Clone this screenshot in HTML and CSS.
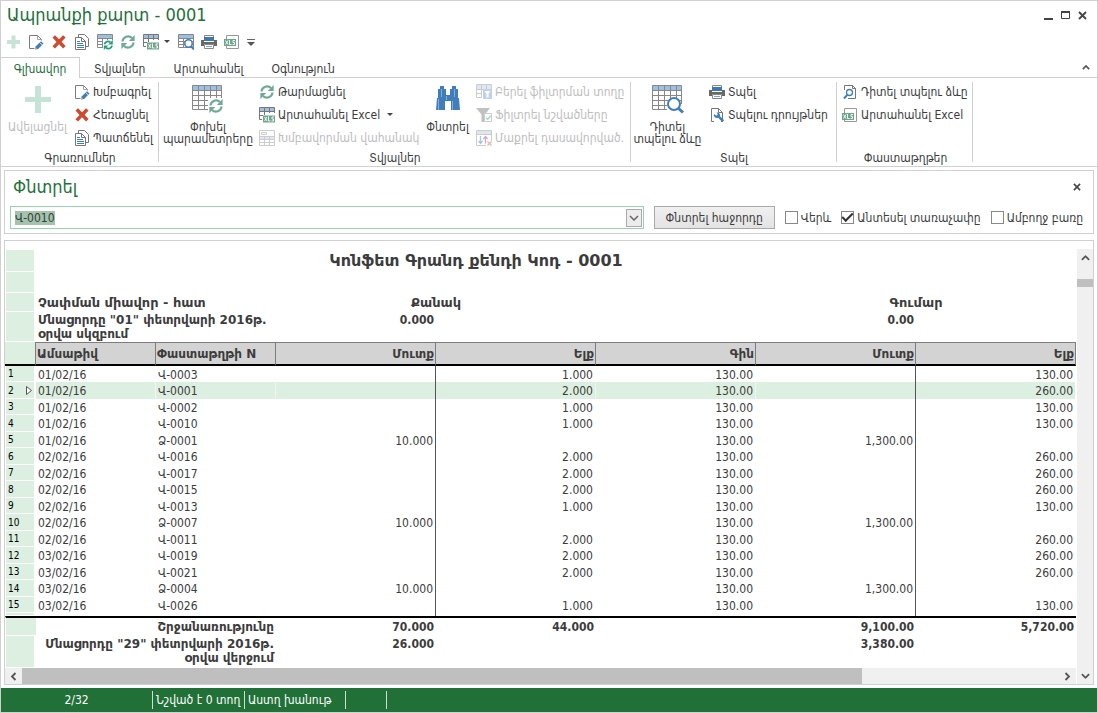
FILE: index.html
```html
<!DOCTYPE html>
<html lang="hy">
<head>
<meta charset="utf-8">
<meta name="viewport" content="width=device-width, initial-scale=1">
<title>Ապրանքի քարտ - 0001</title>
<link rel="stylesheet" href="styles.css">
</head>
<body>
<svg class="sprite" width="0" height="0" aria-hidden="true">
  <symbol id="i-plus" viewBox="0 0 16 16"><path d="M6.500 1.500h4v4.500h4.500v4h-4.500v4.500h-4V10H2V6h4.500z" fill="#c5e3d7"/></symbol>
  <symbol id="i-plus-lg" viewBox="0 0 32 32"><path d="M13 3h6v11h10v5H19v11h-6V19H3v-5h10z" fill="#c5e3d7"/></symbol>
  <symbol id="i-edit" viewBox="0 0 16 16"><path d="M6.500 14.500H1.500V1.500H9.500L13.500 5.500V6.500" fill="none" stroke="#7b7b7b"/><path d="M9.500 1.500V5.500H13" fill="none" stroke="#a5a5a5"/><path d="M7 15.500l.6-3L13 7.200l2.500 2.400-5.300 5.300z" fill="#3f7dbb"/><path d="M7 15.500l.5-2.200 1.600 1.700z" fill="#e6bd6d"/><path d="M11.700 8.500l2.500 2.500" stroke="#fff" stroke-width=".8"/></symbol>
  <symbol id="i-del" viewBox="0 0 16 16"><path d="M1.500 3.500L4 1.200 8.100 5.200 12 1.200l2.600 2.400-4 4.200 4 4.300-2.500 2.400L8 10.300 4 14.600l-2.600-2.400 4.100-4.300z" fill="#ce4a2f"/></symbol>
  <symbol id="i-copy" viewBox="0 0 16 16"><path d="M4.500 3.500V.500H10.500L14.500 4.500V12.500H11.500" fill="none" stroke="#777"/><path d="M1.500 3.500H7.500L11.500 7.500V15.500H1.500zM7.500 3.500V7.500H11.500" fill="#fff" stroke="#777"/><path d="M3 7.500h3M3 9.500h6M3 11.500h7M3 13.500h7" stroke="#3f7dbb"/></symbol>
  <symbol id="i-grid" viewBox="0 0 16 16"><path d="M1 1h14v3H1z" fill="#9fbfe0"/><path d="M.500 .500H15.500V13.500H.500zM.500 4.500H15.500M.500 7.500H15.500M.500 10.500H15.500M5.500 4V13M10.500 4V13" fill="none" stroke="#888"/></symbol>
  <symbol id="i-cycle" viewBox="0 0 16 16"><path d="M2.500 7.500A5.600 5.600 0 0 1 12 4" fill="none" stroke="#6fa994" stroke-width="2.200"/><path d="M14.600 1v6H8.800z" fill="#6fa994"/><path d="M13.500 8.500A5.600 5.600 0 0 1 4 12" fill="none" stroke="#6fa994" stroke-width="2.200"/><path d="M1.400 15V9h5.800z" fill="#6fa994"/></symbol>
  <symbol id="i-gridcycle" viewBox="0 0 16 16"><use href="#i-grid"/><path d="M6 6h10v10H6z" fill="#fff"/><path d="M7.500 10.300A3.600 3.600 0 0 1 13.400 8.300M15 11.700A3.600 3.600 0 0 1 9 13.700" fill="none" stroke="#21a179" stroke-width="1.800"/><path d="M15.800 6v4.500h-4.500zM6.800 16v-4.500h4.500z" fill="#21a179"/></symbol>
  <symbol id="i-mark" viewBox="0 0 12 7"><path d="M0 0h12v7H0z" fill="#6fa58d"/><path d="M1.500 1.500l2.500 4M4 1.500l-2.500 4M5.500 1v4.500h2M11 1.500H9v2h1.500v2H8.500" fill="none" stroke="#fff" stroke-width=".9"/></symbol>
  <symbol id="i-gridxls" viewBox="0 0 16 16"><path d="M1 1h14v3H1z" fill="#9fbfe0"/><path d="M.500 12.500V.500H15.500V6M.500 4.500H15.500M5.500 1V8M10.500 1V6M.500 8.500H4M.500 12.500H3" fill="none" stroke="#777"/><use href="#i-mark" x="4" y="8" width="12" height="8"/></symbol>
  <symbol id="i-gridzoom" viewBox="0 0 16 16"><use href="#i-grid"/><circle cx="10.500" cy="9.500" r="3.700" fill="#fff" stroke="#3f7dbb" stroke-width="1.500"/><path d="M13 12l3 3.500" stroke="#3f7dbb" stroke-width="2"/></symbol>
  <symbol id="i-print" viewBox="0 0 16 16"><path d="M3.500 5V1.500H12.500V5" fill="#fff" stroke="#888"/><path d="M3 3h10v4H3z" fill="#3b78b8"/><path d="M0 6h3v2h10V6h3v6h-3v-2H3v2H0z" fill="#686868"/><path d="M3.500 10.500H12.500V14.500H3.500z" fill="#fff" stroke="#888"/><path d="M5 12.500h6" stroke="#7aa7d4"/></symbol>
  <symbol id="i-xls" viewBox="0 0 16 16"><path d="M2.500 6V1.500H14.500V14.500H2.500V12" fill="#fff" stroke="#999"/><use href="#i-mark" x="0" y="5" width="12" height="7"/></symbol>
  <symbol id="i-docxls" viewBox="0 0 16 16"><path d="M2.500 6V1.500H14.500V14.500H2.500V12" fill="#fff" stroke="#999"/><use href="#i-mark" x="0" y="6" width="12" height="7"/></symbol>
  <symbol id="i-doczoom" viewBox="0 0 16 16"><path d="M2.500 6V1.500H10.500L13.500 4.500V14.500H6M10.500 1.500V4.500H14" fill="none" stroke="#777"/><circle cx="7.500" cy="8.500" r="3" fill="#fff" stroke="#3f7dbb" stroke-width="1.300"/><path d="M5.300 10.800L2 14.500" stroke="#3f7dbb" stroke-width="2"/></symbol>
  <symbol id="i-docset" viewBox="0 0 16 16"><path d="M5 14.500H2.500V1.500H9.500L13.500 5.500V14.500H12M9.500 1.500V5.500H13.500" fill="none" stroke="#777"/><path d="M5 7a3 3 0 0 0 4.200 3.700l4 4.300 2-1.700-4.200-4A3 3 0 0 0 7.500 5.500l1.300 1.800-1.400 1.400z" fill="#3f7dbb"/></symbol>
  <symbol id="i-gridgroup" viewBox="0 0 16 16"><path d="M1 7h14v3H1z" fill="#dde7f6"/><path d="M.500 .500H15.500V15.500H.500zM.500 6.500H15.500M.500 9.500H15.500M.500 12.500H15.500M5.500 7V15M10.500 7V15M2.500 2.500h5v2h-5z" fill="none" stroke="#ccc"/></symbol>
  <symbol id="i-gridfilter" viewBox="0 0 16 16"><path d="M1 1h14v4H1z" fill="#dde7f6"/><path d="M.500 .500H15.500V5.500H.500zM.500 5.500V13.500H6M.500 9.500H6M5.500 .500V13M10.500 .500V5" fill="none" stroke="#ccc"/><path d="M7 5h9v10H7z" fill="#bdd3eb"/><path d="M8.500 7h6l-2 3v3.500h-2V10z" fill="#fff"/></symbol>
  <symbol id="i-filter" viewBox="0 0 16 16"><path d="M0 1h14L9 7.500V15H5.500V7.500z" fill="#c1c1c1"/><path d="M8.500 6.500h7v8h-7z" fill="#fff" stroke="#ccc"/><path d="M10 10.500l1.700 2 3-3.800" fill="none" stroke="#a2d5c1" stroke-width="1.300"/></symbol>
  <symbol id="i-clearsort" viewBox="0 0 16 16"><path d="M1 1h14v3H1z" fill="#dde7f6"/><path d="M10 15.500H.500V.500H15.500V11M.500 4.500H15.500" fill="none" stroke="#ccc"/><path d="M4.500 6v7M2.500 11l2 2.500 2-2.500" fill="none" stroke="#a9c5e4" stroke-width="1.300"/><path d="M9.500 13.500V7M7.500 9l2-2.500 2 2.500" fill="none" stroke="#cfa7cd" stroke-width="1.300"/><path d="M11.500 11.500l4 4M15.500 11.500l-4 4" stroke="#f0b2a5" stroke-width="1.200"/></symbol>
  <symbol id="i-grid-lg" viewBox="0 0 32 32"><path d="M1 3h28v4H1z" fill="#9fbfe0"/><path d="M.500 2.500H29.500V26.500H.500zM.500 7.500H29.500M.500 12.500H29.500M.500 17.500H29.500M.500 22.500H29.500M6.500 3V26M12.500 3V26M18.500 3V26M24.500 3V26" fill="none" stroke="#888"/></symbol>
  <symbol id="i-params" viewBox="0 0 32 32"><use href="#i-grid-lg"/><path d="M16 15h16v17H16z" fill="#fff"/><use href="#i-cycle" x="16" y="15" width="16" height="16"/></symbol>
  <symbol id="i-preview" viewBox="0 0 32 32"><use href="#i-grid-lg"/><path d="M15 21h15v8H15z" fill="#fff"/><circle cx="22" cy="21" r="6" fill="#fff" stroke="#3f7dbb" stroke-width="2"/><path d="M26 25l5 4.500" stroke="#3f7dbb" stroke-width="3"/></symbol>
  <symbol id="i-find" viewBox="0 0 32 32"><path d="M8 3h4v3h2v6h4V6h2V3h4v3h2v9h1l1 12h-9v-9h-6v9H4l1-12h1V6h2z" fill="#3f7dbb"/><path d="M6.500 16v11M9.500 6v8M20.500 18v9M22.500 6v8M14.500 13v4" fill="none" stroke="#86add6"/></symbol>
  <symbol id="i-caret" viewBox="0 0 6 4"><path d="M0 0h6L3 3z" fill="#444"/></symbol>
  <symbol id="i-up" viewBox="0 0 10 6"><path d="M1 5l4-4 4 4" fill="none" stroke="#555" stroke-width="2"/></symbol>
  <symbol id="i-close" viewBox="0 0 9 9"><path d="M1 1l7 7M8 1L1 8" stroke="#444" stroke-width="1.800"/></symbol>
</svg>

<div class="window">
  <header class="titlebar">
    <h1>Ապրանքի քարտ - 0001</h1>
    <div class="winbtns">
      <button aria-label="Minimize"><svg width="9" height="9"><path d="M0 7h9v2H0z" fill="#444"/></svg></button>
      <button aria-label="Maximize"><svg width="9" height="9"><path d="M.500 1.500h8v6h-8z" fill="none" stroke="#444"/><path d="M0 0h9v2H0z" fill="#444"/></svg></button>
      <button aria-label="Close"><svg width="9" height="9"><use href="#i-close"/></svg></button>
    </div>
  </header>

  <div class="quick">
    <button aria-label="Ավելացնել"><svg class="ic"><use href="#i-plus"/></svg></button>
    <button aria-label="Խմբագրել"><svg class="ic"><use href="#i-edit"/></svg></button>
    <button aria-label="Հեռացնել"><svg class="ic"><use href="#i-del"/></svg></button>
    <button aria-label="Պատճենել"><svg class="ic"><use href="#i-copy"/></svg></button>
    <button aria-label="Փոխել պարամետրերը"><svg class="ic"><use href="#i-gridcycle"/></svg></button>
    <button aria-label="Թարմացնել"><svg class="ic"><use href="#i-cycle"/></svg></button>
    <button aria-label="Արտահանել Excel"><svg class="ic"><use href="#i-gridxls"/></svg><svg class="caret"><use href="#i-caret"/></svg></button>
    <button aria-label="Դիտել տպելու ձևը"><svg class="ic"><use href="#i-gridzoom"/></svg></button>
    <button aria-label="Տպել"><svg class="ic"><use href="#i-print"/></svg></button>
    <button aria-label="XLS"><svg class="ic"><use href="#i-xls"/></svg></button>
    <button aria-label="More"><svg width="8" height="7"><path d="M0 .500h8" stroke="#666"/><path d="M0 3h8L4 7z" fill="#555"/></svg></button>
  </div>

  <nav class="tabs">
    <button class="tab active">Գլխավոր</button>
    <button class="tab">Տվյալներ</button>
    <button class="tab">Արտահանել</button>
    <button class="tab">Օգնություն</button>
    <button class="collapse" aria-label="Collapse"><svg width="8" height="5"><use href="#i-up"/></svg></button>
  </nav>

  <div class="ribbon">
    <section class="group g-records">
      <div class="tools">
        <button class="big" disabled><svg><use href="#i-plus-lg"/></svg><span>Ավելացնել</span></button>
        <div class="stack">
          <button><svg class="ic"><use href="#i-edit"/></svg>Խմբագրել</button>
          <button><svg class="ic"><use href="#i-del"/></svg>Հեռացնել</button>
          <button><svg class="ic"><use href="#i-copy"/></svg>Պատճենել</button>
        </div>
      </div>
      <h2>Գրառումներ</h2>
    </section>
    <section class="group g-data">
      <div class="tools">
        <button class="big wide"><svg><use href="#i-params"/></svg><span>Փոխել<br>պարամետրերը</span></button>
        <div class="stack">
          <button><svg class="ic"><use href="#i-cycle"/></svg>Թարմացնել</button>
          <button><svg class="ic"><use href="#i-gridxls"/></svg>Արտահանել Excel<svg class="caret"><use href="#i-caret"/></svg></button>
          <button disabled><svg class="ic"><use href="#i-gridgroup"/></svg>Խմբավորման վահանակ</button>
        </div>
        <button class="big find"><svg><use href="#i-find"/></svg><span>Փնտրել</span></button>
        <div class="stack">
          <button disabled><svg class="ic"><use href="#i-gridfilter"/></svg>Բերել ֆիլտրման տողը</button>
          <button disabled><svg class="ic"><use href="#i-filter"/></svg>Ֆիլտրել նշվածները</button>
          <button disabled><svg class="ic"><use href="#i-clearsort"/></svg>Մաքրել դասավորված.</button>
        </div>
      </div>
      <h2>Տվյալներ</h2>
    </section>
    <section class="group g-print">
      <div class="tools">
        <button class="big"><svg><use href="#i-preview"/></svg><span>Դիտել<br>տպելու ձևը</span></button>
        <div class="stack">
          <button><svg class="ic"><use href="#i-print"/></svg>Տպել</button>
          <button><svg class="ic"><use href="#i-docset"/></svg>Տպելու դրույթներ</button>
        </div>
      </div>
      <h2>Տպել</h2>
    </section>
    <section class="group g-docs">
      <div class="tools">
        <div class="stack">
          <button><svg class="ic"><use href="#i-doczoom"/></svg>Դիտել տպելու ձևը</button>
          <button><svg class="ic"><use href="#i-docxls"/></svg>Արտահանել Excel</button>
        </div>
      </div>
      <h2>Փաստաթղթեր</h2>
    </section>
  </div>

  <form class="search" onsubmit="return false">
    <div class="search-head">
      <h2>Փնտրել</h2>
      <button type="button" aria-label="Close"><svg width="8" height="8" viewBox="0 0 9 9"><use href="#i-close"/></svg></button>
    </div>
    <div class="search-row">
      <div class="combo">
        <input id="query" type="text" value="Վ-0010" aria-label="Փնտրել" autofocus>
        <button type="button" aria-label="Open"><svg width="10" height="6"><path d="M1 1l4 4 4-4" fill="none" stroke="#666" stroke-width="1.500"/></svg></button>
      </div>
      <button class="next">Փնտրել հաջորդը</button>
      <label><input type="checkbox">Վերև</label>
      <label><input type="checkbox" checked>Անտեսել տառաչափը</label>
      <label><input type="checkbox">Ամբողջ բառը</label>
    </div>
  </form>

  <main class="sheet">
    <table>
      <colgroup><col class="c-num"><col class="c-id"><col class="c-id"><col class="c-val"><col class="c-val"><col class="c-val"><col class="c-val"><col class="c-val"></colgroup>
      <thead>
        <tr class="h-title"><td class="gut"></td><th colspan="6" class="doc-title">Կոնֆետ Գրանդ քենդի Կոդ - 0001</th><td></td></tr>
        <tr class="h-gap"><td class="gut"></td><td colspan="7"></td></tr>
        <tr class="h-unit"><td class="gut"></td><th colspan="2" class="l">Չափման միավոր - հատ</th><th colspan="2">Քանակ</th><td></td><th colspan="2">Գումար</th></tr>
        <tr class="h-open"><td class="gut"></td><th colspan="2" class="l">Մնացորդը "01" փետրվարի 2016թ.<br>օրվա սկզբում</th><th class="r num">0.000</th><td></td><td></td><th class="r num">0.00</th><td></td></tr>
        <tr class="heads"><td class="gut"></td><th class="l">Ամսաթիվ</th><th class="l">Փաստաթղթի N</th><th>Մուտք</th><th>Ելք</th><th>Գին</th><th>Մուտք</th><th>Ելք</th></tr>
      </thead>
      <tbody>
        <tr><th>1</th><td>01/02/16</td><td>Վ-0003</td><td></td><td>1.000</td><td>130.00</td><td></td><td>130.00</td></tr>
        <tr class="sel"><th>2<svg width="6" height="9"><path d="M.500 .500v8l5-4z" fill="#fff" stroke="#555"/></svg></th><td>01/02/16</td><td>Վ-0001</td><td></td><td>2.000</td><td>130.00</td><td></td><td>260.00</td></tr>
        <tr><th>3</th><td>01/02/16</td><td>Վ-0002</td><td></td><td>1.000</td><td>130.00</td><td></td><td>130.00</td></tr>
        <tr><th>4</th><td>01/02/16</td><td>Վ-0010</td><td></td><td>1.000</td><td>130.00</td><td></td><td>130.00</td></tr>
        <tr><th>5</th><td>01/02/16</td><td>Ձ-0001</td><td>10.000</td><td></td><td>130.00</td><td>1,300.00</td><td></td></tr>
        <tr><th>6</th><td>02/02/16</td><td>Վ-0016</td><td></td><td>2.000</td><td>130.00</td><td></td><td>260.00</td></tr>
        <tr><th>7</th><td>02/02/16</td><td>Վ-0017</td><td></td><td>2.000</td><td>130.00</td><td></td><td>260.00</td></tr>
        <tr><th>8</th><td>02/02/16</td><td>Վ-0015</td><td></td><td>2.000</td><td>130.00</td><td></td><td>260.00</td></tr>
        <tr><th>9</th><td>02/02/16</td><td>Վ-0013</td><td></td><td>1.000</td><td>130.00</td><td></td><td>130.00</td></tr>
        <tr><th>10</th><td>02/02/16</td><td>Ձ-0007</td><td>10.000</td><td></td><td>130.00</td><td>1,300.00</td><td></td></tr>
        <tr><th>11</th><td>02/02/16</td><td>Վ-0011</td><td></td><td>2.000</td><td>130.00</td><td></td><td>260.00</td></tr>
        <tr><th>12</th><td>03/02/16</td><td>Վ-0019</td><td></td><td>2.000</td><td>130.00</td><td></td><td>260.00</td></tr>
        <tr><th>13</th><td>03/02/16</td><td>Վ-0021</td><td></td><td>2.000</td><td>130.00</td><td></td><td>260.00</td></tr>
        <tr><th>14</th><td>03/02/16</td><td>Ձ-0004</td><td>10.000</td><td></td><td>130.00</td><td>1,300.00</td><td></td></tr>
        <tr><th>15</th><td>03/02/16</td><td>Վ-0026</td><td></td><td>1.000</td><td>130.00</td><td></td><td>130.00</td></tr>
        <tr class="cut"><th></th><td></td><td></td><td></td><td></td><td></td><td></td><td></td></tr>
      </tbody>
      <tfoot>
        <tr class="turnover"><td class="gut"></td><th colspan="2">Շրջանառությունը</th><th class="num">70.000</th><th class="num">44.000</th><td></td><th class="num">9,100.00</th><th class="num">5,720.00</th></tr>
        <tr class="h-close"><td class="gut"></td><th colspan="2">Մնացորդը "29" փետրվարի 2016թ.<br>օրվա վերջում</th><th class="num">26.000</th><td></td><td></td><th class="num">3,380.00</th><td></td></tr>
      </tfoot>
    </table>
    <div class="vbar">
      <button aria-label="Up"><svg width="9" height="6" viewBox="0 0 10 6"><use href="#i-up"/></svg></button>
      <div class="vtrack"><div class="vthumb"></div></div>
      <button aria-label="Down"><svg class="flip" width="9" height="6" viewBox="0 0 10 6"><use href="#i-up"/></svg></button>
    </div>
    <div class="hbar">
      <button aria-label="Left"><svg width="7" height="9"><path d="M5.500 1L2 4.500 5.500 8" fill="none" stroke="#555" stroke-width="1.800"/></svg></button>
      <div class="htrack"><div class="hthumb"></div></div>
      <button aria-label="Right"><svg width="7" height="9"><path d="M1.500 1L5 4.500 1.500 8" fill="none" stroke="#555" stroke-width="1.800"/></svg></button>
    </div>
  </main>

  <footer class="status">
    <span class="pos">2/32</span>
    <span class="marked">Նշված է 0 տող</span>
    <span class="store">Աստղ խանութ</span>
    <span class="slot"></span>
    <span></span>
  </footer>
</div>
<script>
  const query = document.getElementById("query");
  query.focus();
  query.select();
</script>
</body>
</html>
```

FILE: styles.css
```css
* { box-sizing: border-box; }

body {
  margin: 0;
  background: #fff;
  color: #3c3c3c;
  font: 12px/14px "DejaVu Sans Condensed", "DejaVu Sans", sans-serif;
}

.sprite { position: absolute; }

h1, h2 { margin: 0; font-weight: normal; }

button {
  display: flex;
  align-items: center;
  padding: 0;
  border: 0;
  background: none;
  color: inherit;
  font: inherit;
  white-space: nowrap;
}
button:disabled { color: #bdbdbd; }

.ic { flex: none; width: 16px; height: 16px; }
.caret { flex: none; width: 6px; height: 4px; }

.window {
  display: flex;
  flex-direction: column;
  min-height: 100vh;
  border: 1px solid #d0d0d0;
}

/* title and quick access */
.titlebar {
  display: flex;
  justify-content: space-between;
  align-items: center;
  height: 28px;
  padding: 0 10px 0 6px;
}
.titlebar h1 {
  color: #217038;
  font-size: 18px;
  line-height: 22px;
}
.winbtns { display: flex; gap: 8px; }

.quick {
  display: flex;
  gap: 7px;
  height: 28px;
  padding: 0 4px 2px;
}
.quick .caret { margin: 0 1px 0 5px; }

/* ribbon tabs */
.tabs {
  display: flex;
  height: 21px;
  border-bottom: 1px solid #d0d0d0;
}
.tab {
  justify-content: center;
  height: 21px;
  padding: 2px 14px 0;
}
.tab.active {
  width: 79px;
  padding-top: 1px;
  border: 1px solid #d0d0d0;
  border-width: 1px 1px 0 0;
  background: #fff;
  color: #217038;
}
.collapse { margin-left: auto; padding: 0 7px; }

/* ribbon */
.ribbon {
  display: flex;
  height: 89px;
  padding-top: 2px;
  border-bottom: 1px solid #d0d0d0;
}
.group {
  display: flex;
  flex-direction: column;
  justify-content: space-between;
  padding: 0 4px;
  background: linear-gradient(#d0d0d0, #d0d0d0) right 2px / 1px 80px no-repeat;
}
.group h2 { padding-bottom: 1px; text-align: center; font-size: 12px; line-height: 14px; }
.g-records { width: 158px; }
.g-data { width: 472px; }
.g-print { width: 206px; }
.g-docs { width: 136px; padding-left: 5px; }
.tools { display: flex; }
.stack { display: flex; flex-direction: column; }
.stack button { gap: 3px; height: 23px; }
.stack .caret { margin-left: 4px; }
.big {
  flex: none;
  flex-direction: column;
  align-items: center;
  width: 65px;
  height: 65px;
  padding-top: 3px;
  line-height: 12px;
}
.big svg { flex: none; width: 32px; height: 32px; margin-bottom: 6px; }
.big.wide { width: 90px; }
.big.find { width: 43px; }
.g-records .stack { margin-left: 4px; }
.g-data .stack { width: 167px; margin-left: 6px; }
.g-data .find + .stack { width: auto; margin-left: 7px; }
.g-print .stack { margin-left: 9px; }

/* search panel */
.search {
  margin: 3px 3px 0;
  padding: 0 10px 4px 5px;
  border: 1px solid #d0d0d0;
}
.search-head {
  display: flex;
  justify-content: space-between;
  align-items: center;
  height: 35px;
  padding: 0 2px 4px 3px;
}
.search h2 { color: #217038; font-size: 18px; line-height: 22px; }
.search-row { display: flex; align-items: center; }
.combo {
  display: flex;
  flex: 1;
  align-items: center;
  min-width: 0;
  height: 23px;
  padding: 0 1px 0 4px;
  border: 1px solid #97d3b1;
}
.combo input {
  flex: 1;
  min-width: 0;
  padding: 0;
  border: 0;
  outline: 0;
  background: none;
  color: #3c3c3c;
  font: inherit;
}
.combo input::selection { background: #a3c3ac; color: #3c3c3c; }
.combo button {
  justify-content: center;
  width: 16px;
  height: 18px;
  border: 1px solid #aaa;
  background: #ececec;
}
.next {
  justify-content: center;
  width: 121px;
  height: 23px;
  margin-left: 10px;
  border: 1px solid #a9a9a9;
  background: linear-gradient(#f0f0f0, #e3e3e3);
}
.search label {
  display: flex;
  align-items: center;
  gap: 3px;
  margin-left: 10px;
  white-space: nowrap;
}
.search label input {
  display: grid;
  place-items: center;
  appearance: none;
  width: 13px;
  height: 13px;
  margin: 0;
  border: 1px solid #888;
  background: #fff;
}
.search label input:checked::before {
  content: "";
  width: 9px;
  height: 4px;
  margin-bottom: 3px;
  border: solid #333;
  border-width: 0 0 2px 2px;
  rotate: -45deg;
}

/* sheet */
.sheet {
  display: grid;
  grid-template-columns: 1fr 16px;
  flex: 1;
  align-content: start;
  margin: 6px 3px 3px;
  padding-top: 8px;
  border: 1px solid #d0d0d0;
}
.sheet table {
  width: calc(100% - 1px);
  margin-top: 1px;
  border-collapse: separate;
  border-spacing: 0;
  table-layout: fixed;
}
.c-num { width: 31px; }
.c-id { width: 120px; }
.c-val { width: 160px; }
.sheet td, .sheet th { padding: 0 2px; line-height: 14px; }

.gut, tbody th {
  border: solid #fff;
  border-width: 0 2px 1px 1px;
  background: #ddefe0;
}
thead th, tfoot th { font-family: "DejaVu Sans", sans-serif; }
thead .num, tfoot .num { font-family: "DejaVu Sans Condensed", "DejaVu Sans", sans-serif; }
.h-title { height: 22px; }
.h-gap { height: 21px; }
.h-unit { height: 19px; font-size: 13px; }
.h-open { height: 30px; vertical-align: top; }
.sheet .doc-title { font-size: 16px; line-height: 20px; }
.sheet .l { text-align: left; white-space: nowrap; }
.sheet .r { text-align: right; }
.heads { height: 24px; }
.heads th {
  border: 1px solid #7d7d7d;
  border-width: 1px 1px 2px 0;
  border-bottom-color: #000;
  background: #d3d3d3;
  text-align: right;
}
.sheet .heads th { padding: 0 1px; }
.heads .gut { border-right: 1px solid #7d7d7d; border-bottom: 2px solid #000; border-left: 0; }

tbody tr { height: 16px; }
tbody tr:nth-child(even) { height: 17px; }
tbody th {
  color: #000;
  font-size: 10px;
  font-weight: normal;
  text-align: left;
}
tbody th svg { float: right; margin-top: 2px; }
.sheet tbody td, .sheet tbody th { padding-top: 1px; }
tbody td { border-right: 1px solid #fff; text-align: right; }
tbody td:nth-child(-n+3) { text-align: left; }
tbody td:nth-child(4), tbody td:nth-child(7) { border-right-color: #555; text-align: right; }
.sel td { background: #ddefe0; }
.sel td:nth-child(2), .sel td:nth-child(3), .sel td:nth-child(5), .sel td:nth-child(6) { border-right-color: #eef8f0; }
tbody tr.cut:last-child { height: 3px; }
.sheet tbody .cut td, .sheet tbody .cut th { padding: 0; line-height: 0; }

.turnover { height: 20px; }
.turnover td, .turnover th { border-top: 2px solid #000; }
.turnover .gut { border-right-width: 0; }
.h-close { height: 32px; vertical-align: top; }
tfoot th { text-align: right; }
.sheet .h-close th, .sheet .h-open th { padding-top: 1px; }

/* scroll bars */
.vbar {
  display: flex;
  grid-row: 1 / 3;
  grid-column: 2;
  flex-direction: column;
  background: #f0f0f0;
}
.vbar button, .hbar button {
  justify-content: center;
  width: 16px;
  height: 17px;
}
.vtrack { flex: 1; padding-top: 13px; }
.vthumb { height: 8px; background: #bfbfbf; }
.flip { rotate: 180deg; }
.hbar { display: flex; height: 16px; margin-right: 1px; background: #f0f0f0; }
.hbar button { width: 17px; height: 16px; }
.htrack { flex: 1; }
.hthumb { width: 81%; height: 16px; background: #bfbfbf; }

/* status bar */
.status {
  display: flex;
  align-items: center;
  height: 24px;
  background: #217038;
  color: #fff;
}
.status span {
  height: 18px;
  padding: 0 3px;
  border-right: 1px solid #cfe0d3;
  line-height: 18px;
  white-space: nowrap;
}
.status .pos { width: 152px; text-align: center; }
.status .marked { width: 92px; }
.status .store { width: 101px; }
.status .slot { width: 41px; }
.status span:last-child { border: 0; }
```
